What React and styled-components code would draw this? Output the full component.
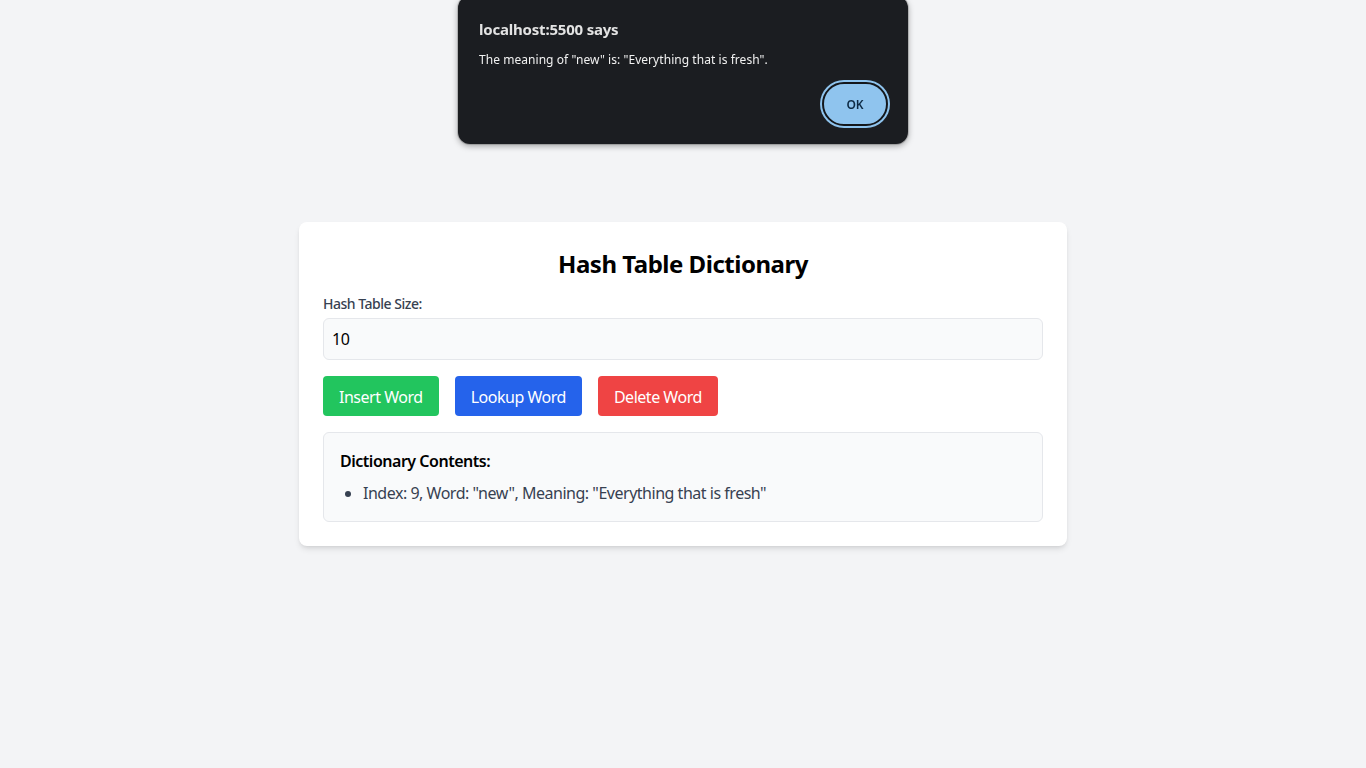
import React from "react";
import styled, { createGlobalStyle } from "styled-components";

const Global = createGlobalStyle`
  * { box-sizing: border-box; }
  html, body { margin: 0; padding: 0; }
  body {
    background: #f3f4f6;
    font-family: "Noto Sans", "Open Sans", sans-serif;
    color: #000;
  }
`;

const Page = styled.div`
  min-height: 100vh;
  display: flex;
  align-items: center;
  justify-content: center;
  letter-spacing: -0.03em;
`;

const Card = styled.div`
  width: 768px;
  background: #fff;
  border-radius: 8px;
  padding: 24px;
  box-shadow: 0 4px 6px -1px rgba(0,0,0,0.1), 0 2px 4px -2px rgba(0,0,0,0.1);
`;

const Title = styled.h1`
  margin: 0 0 14px;
  padding-top: 2px;
  font-size: 24px;
  line-height: 32px;
  font-weight: 700;
  text-align: center;
`;

const Label = styled.label`
  display: block;
  font-size: 14px;
  line-height: 20px;
  font-weight: 500;
  color: #374151;
  margin-bottom: 4px;
  padding-top: 1px;
  margin-top: -1px;
`;

const Input = styled.input`
  display: block;
  width: 100%;
  height: 42px;
  padding: 8px;
  font: inherit;
  font-size: 16px;
  letter-spacing: inherit;
  color: #000;
  background: #f9fafb;
  border: 1px solid #e5e7eb;
  border-radius: 6px;
  margin-bottom: 16px;
  outline: none;
`;

const ButtonRow = styled.div`
  display: flex;
  gap: 16px;
  margin-bottom: 16px;
`;

const Button = styled.button`
  height: 40px;
  padding: 1px 16px 0;
  border: none;
  border-radius: 4px;
  font: inherit;
  font-size: 16px;
  letter-spacing: inherit;
  color: #fff;
  background: ${(p) => p.$bg};
  cursor: pointer;
`;

const Contents = styled.div`
  background: #f9fafb;
  border: 1px solid #e5e7eb;
  border-radius: 6px;
  padding: 16px;
`;

const ContentsTitle = styled.h2`
  margin: 0 0 8px;
  font-size: 16px;
  line-height: 24px;
  font-weight: 600;
`;

const List = styled.ul`
  margin: 0;
  padding-left: 23px;
  list-style: disc;
  color: #374151;
  font-size: 16px;
  line-height: 24px;
`;

const Dialog = styled.div`
  position: fixed;
  top: -4px;
  left: 458px;
  width: 450px;
  height: 148px;
  background: #1b1d21;
  border-radius: 12px;
  box-shadow: 0 2px 6px rgba(0,0,0,0.35), 0 0 0 1px rgba(0,0,0,0.15);
  padding: 23px 20px 0 21px;
  display: flex;
  flex-direction: column;
  color: #e3e3e3;
`;

const DialogTitle = styled.div`
  font-size: 15px;
  line-height: 20px;
  font-weight: 700;
  letter-spacing: -0.2px;
  color: #e3e3e3;
  margin-bottom: 12px;
`;

const DialogMessage = styled.div`
  font-size: 12px;
  line-height: 18px;
  letter-spacing: 0.05px;
  color: #f1f1f1;
`;

const DialogActions = styled.div`
  display: flex;
  justify-content: flex-end;
  margin-top: 13px;
`;

const OkButton = styled.button`
  width: 66px;
  height: 44px;
  border-radius: 22px;
  background: #8fc4ee;
  color: #0d2a44;
  font: inherit;
  font-size: 12px;
  font-weight: 600;
  border: 2px solid #14171b;
  box-shadow: 0 0 0 2px #8fc4ee;
`;

export default function App() {
  return (
    <>
      <Global />
      <Page>
        <Card>
          <Title>Hash Table Dictionary</Title>
          <Label htmlFor="size">Hash Table Size:</Label>
          <Input id="size" type="text" defaultValue="10" />
          <ButtonRow>
            <Button $bg="#22c55e">Insert Word</Button>
            <Button $bg="#2563eb">Lookup Word</Button>
            <Button $bg="#ef4444">Delete Word</Button>
          </ButtonRow>
          <Contents>
            <ContentsTitle>Dictionary Contents:</ContentsTitle>
            <List>
              <li>Index: 9, Word: "new", Meaning: "Everything that is fresh"</li>
            </List>
          </Contents>
        </Card>
      </Page>
      <Dialog>
        <DialogTitle>localhost:5500 says</DialogTitle>
        <DialogMessage>The meaning of "new" is: "Everything that is fresh".</DialogMessage>
        <DialogActions>
          <OkButton>OK</OkButton>
        </DialogActions>
      </Dialog>
    </>
  );
}
